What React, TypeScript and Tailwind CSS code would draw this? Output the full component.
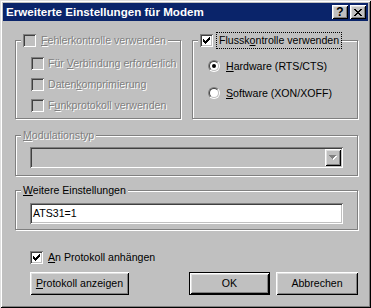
import React from 'react';

const sunken =
  'shadow-[inset_1px_1px_#808080,inset_-1px_-1px_#ffffff,inset_2px_2px_#404040,inset_-2px_-2px_#c0c0c0]';
const raised =
  'shadow-[inset_1px_1px_#ffffff,inset_-1px_-1px_#000000,inset_2px_2px_#dfdfdf,inset_-2px_-2px_#808080]';
const dim = 'text-[#808080] [text-shadow:1px_1px_0_#ffffff] whitespace-nowrap';

const CheckMark = () => (
  <svg width="7" height="7" viewBox="0 0 7 7" shapeRendering="crispEdges" fill="#000">
    <rect x="6" y="0" width="1" height="1" />
    <rect x="5" y="1" width="2" height="1" />
    <rect x="0" y="2" width="1" height="1" />
    <rect x="4" y="2" width="3" height="1" />
    <rect x="0" y="3" width="2" height="1" />
    <rect x="3" y="3" width="3" height="1" />
    <rect x="0" y="4" width="5" height="1" />
    <rect x="1" y="5" width="3" height="1" />
    <rect x="2" y="6" width="1" height="1" />
  </svg>
);

const CloseGlyph = () => (
  <svg width="8" height="7" viewBox="0 0 8 7" shapeRendering="crispEdges" fill="#000">
    <rect x="0" y="0" width="2" height="1" />
    <rect x="6" y="0" width="2" height="1" />
    <rect x="1" y="1" width="2" height="1" />
    <rect x="5" y="1" width="2" height="1" />
    <rect x="2" y="2" width="4" height="1" />
    <rect x="3" y="3" width="2" height="1" />
    <rect x="2" y="4" width="4" height="1" />
    <rect x="1" y="5" width="2" height="1" />
    <rect x="5" y="5" width="2" height="1" />
    <rect x="0" y="6" width="2" height="1" />
    <rect x="6" y="6" width="2" height="1" />
  </svg>
);

const Check = ({ checked = false, disabled = false }: { checked?: boolean; disabled?: boolean }) => (
  <span
    className={`w-[13px] h-[13px] shrink-0 flex items-center justify-center ${
      disabled ? 'bg-[#c0c0c0]' : 'bg-white'
    } ${sunken}`}
  >
    {checked && <CheckMark />}
  </span>
);

const Radio = ({ checked = false }: { checked?: boolean }) => (
  <span className="w-[12px] h-[12px] shrink-0 rounded-full border border-t-[#808080] border-l-[#808080] border-b-white border-r-white">
    <span className="w-full h-full rounded-full bg-white border border-t-[#404040] border-l-[#404040] border-b-[#c0c0c0] border-r-[#c0c0c0] flex items-center justify-center">
      {checked && <span className="w-[4px] h-[4px] rounded-full bg-black" />}
    </span>
  </span>
);

// accelerator key: underlined letter
const Key = ({ children }: { children: React.ReactNode }) => (
  <span className="underline underline-offset-[1px] decoration-1">{children}</span>
);

interface GroupProps {
  legend: React.ReactNode;
  className?: string;
  children?: React.ReactNode;
}

const Group: React.FC<GroupProps> = ({ legend, className = '', children }) => (
  <div
    className={`relative shrink-0 border border-[#808080] shadow-[inset_1px_1px_#ffffff,1px_1px_#ffffff] ${className}`}
  >
    <div className="absolute left-[5px] top-[-7px] h-[13px] px-[2px] bg-[#c0c0c0] flex items-center gap-[5px]">
      {legend}
    </div>
    {children}
  </div>
);

const Button = ({
  children,
  className = '',
  isDefault = false,
}: {
  children: React.ReactNode;
  className?: string;
  isDefault?: boolean;
}) =>
  isDefault ? (
    <div className={`h-[23px] border border-black shrink-0 ${className}`}>
      <div className={`h-full flex items-center justify-center bg-[#c0c0c0] ${raised}`}>{children}</div>
    </div>
  ) : (
    <div className={`h-[23px] shrink-0 flex items-center justify-center bg-[#c0c0c0] ${raised} ${className}`}>
      {children}
    </div>
  );

export default function App() {
  return (
    <div className="w-[371px] h-[308px] bg-[#c0c0c0] p-[3px] font-['Liberation_Sans',Arial,sans-serif] text-[10.6px] leading-[13px] text-black select-none shadow-[inset_1px_1px_#dfdfdf,inset_-1px_-1px_#000000,inset_2px_2px_#ffffff,inset_-2px_-2px_#808080]">
      {/* Title bar */}
      <div className="h-[18px] bg-[#0a246a] flex items-center pl-[3px] pr-[2px]">
        <span className="flex-1 text-white font-bold text-[11.6px] leading-[14px] whitespace-nowrap">
          Erweiterte Einstellungen für Modem
        </span>
        <div
          className={`w-[16px] h-[14px] bg-[#c0c0c0] text-black flex items-center justify-center font-bold text-[12px] leading-[12px] ${raised}`}
        >
          ?
        </div>
        <div className={`w-[16px] h-[14px] ml-[2px] bg-[#c0c0c0] flex items-center justify-center ${raised}`}>
          <CloseGlyph />
        </div>
      </div>

      <div className="pl-[12px]">
        {/* Error control / flow control */}
        <div className="flex gap-[11px] mt-[19px]">
          <Group
            className="w-[166px] h-[79px]"
            legend={
              <>
                <Check disabled />
                <span className={dim}>
                  <Key>F</Key>ehlerkontrolle verwenden
                </span>
              </>
            }
          >
            <div className="flex flex-col gap-[8px] pl-[15px] pt-[16px]">
              <div className="flex items-center gap-[4px] h-[13px]">
                <Check disabled />
                <span className={dim}>
                  Für <Key>V</Key>erbindung erforderlich
                </span>
              </div>
              <div className="flex items-center gap-[4px] h-[13px]">
                <Check disabled />
                <span className={dim}>
                  Daten<Key>k</Key>omprimierung
                </span>
              </div>
              <div className="flex items-center gap-[4px] h-[13px]">
                <Check disabled />
                <span className={dim}>
                  F<Key>u</Key>nkprotokoll verwenden
                </span>
              </div>
            </div>
          </Group>

          <Group
            className="w-[166px] h-[79px]"
            legend={
              <>
                <Check checked />
                <span className="whitespace-nowrap outline outline-1 outline-dotted outline-black outline-offset-[1px] px-[1px]">
                  Flussk<Key>o</Key>ntrolle verwenden
                </span>
              </>
            }
          >
            <div className="flex flex-col gap-[15px] pl-[15px] pt-[19px]">
              <div className="flex items-center gap-[6px] h-[12px]">
                <Radio checked />
                <span className="whitespace-nowrap">
                  <Key>H</Key>ardware (RTS/CTS)
                </span>
              </div>
              <div className="flex items-center gap-[6px] h-[12px]">
                <Radio />
                <span className="whitespace-nowrap">
                  <Key>S</Key>oftware (XON/XOFF)
                </span>
              </div>
            </div>
          </Group>
        </div>

        {/* Modulation type */}
        <Group
          className="w-[343px] h-[41px] mt-[16px]"
          legend={
            <span className={dim}>
              <Key>M</Key>odulationstyp
            </span>
          }
        >
          <div className={`ml-[14px] mt-[11px] w-[313px] h-[21px] bg-[#c0c0c0] p-[2px] flex justify-end ${sunken}`}>
            <div className={`w-[16px] h-[17px] flex items-center justify-center ${raised}`}>
              <svg width="8" height="5" viewBox="0 0 8 5" shapeRendering="crispEdges">
                <path d="M1 1h7v1H1zM2 2h5v1H2zM3 3h3v1H3zM4 4h1v1H4z" fill="#ffffff" />
                <path d="M0 0h7v1H0zM1 1h5v1H1zM2 2h3v1H2zM3 3h1v1H3z" fill="#808080" />
              </svg>
            </div>
          </div>
        </Group>

        {/* Additional settings */}
        <Group
          className="w-[343px] h-[40px] mt-[14px]"
          legend={
            <span className="whitespace-nowrap">
              <Key>W</Key>eitere Einstellungen
            </span>
          }
        >
          <div className={`ml-[14px] mt-[12px] w-[313px] h-[21px] bg-white pl-[3px] flex items-center ${sunken}`}>
            ATS31=1
          </div>
        </Group>

        <div className="mt-[21px] pl-[15px] flex items-center gap-[5px] h-[13px]">
          <Check checked />
          <span className="whitespace-nowrap">
            <Key>A</Key>n Protokoll anhängen
          </span>
        </div>

        <div className="mt-[8px] flex">
          <Button className="ml-[15px] w-[99px]">
            <span className="whitespace-nowrap">
              <Key>P</Key>rotokoll anzeigen
            </span>
          </Button>
          <Button isDefault className="ml-[60px] w-[81px]">
            OK
          </Button>
          <Button className="ml-[6px] w-[82px]">Abbrechen</Button>
        </div>
      </div>
    </div>
  );
}
